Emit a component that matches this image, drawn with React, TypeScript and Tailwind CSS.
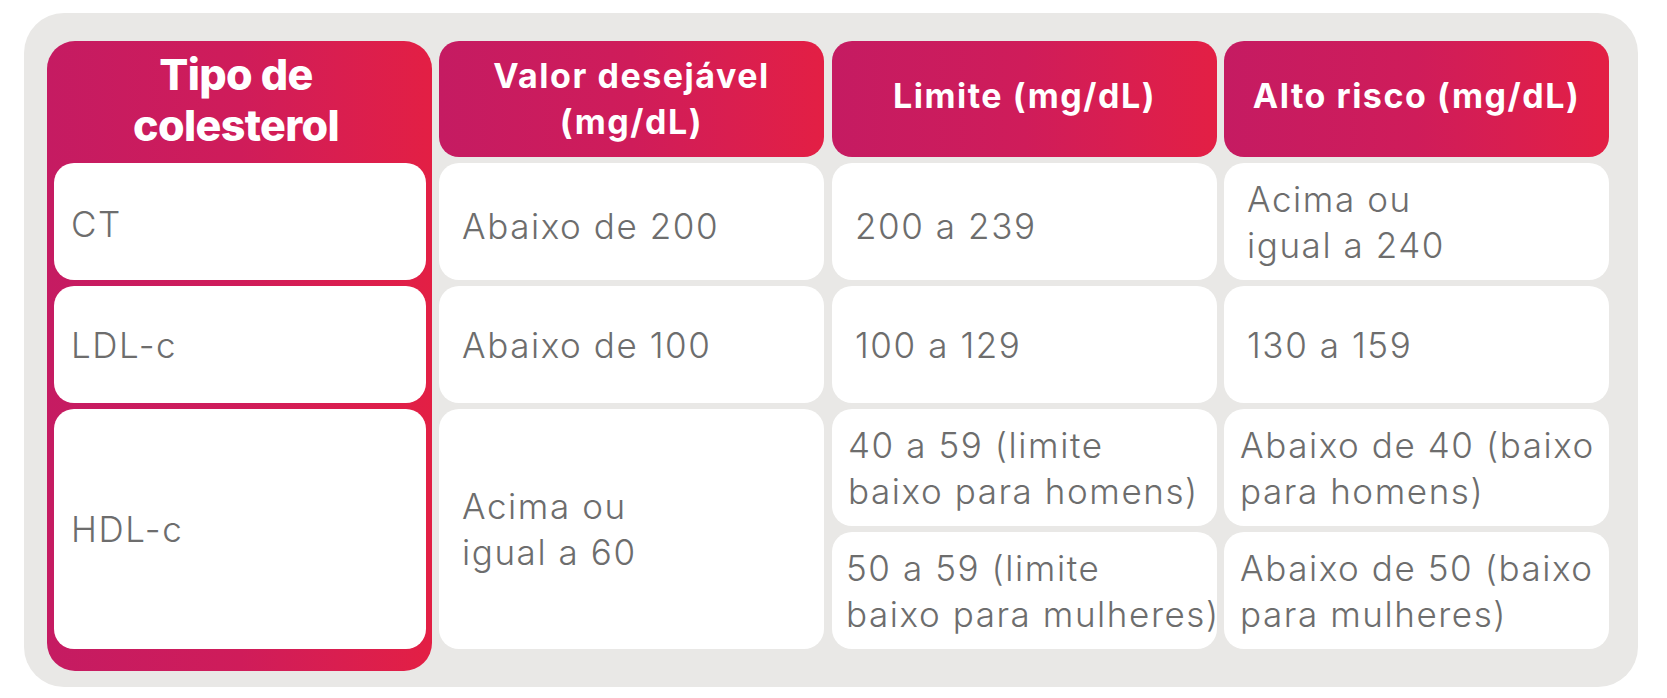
import React from 'react';

const font = { fontFamily: 'Inter, "Noto Sans", sans-serif' };

const headGrad = 'bg-linear-to-r from-[#c51b62] via-[#cf1c5a] to-[#e31f44]';

function Head({ lines, extra = '' }: { lines: string[]; extra?: string }) {
  return (
    <div
      className={`h-[116px] rounded-[20px] ${headGrad} ${extra} flex flex-col items-center justify-center text-white font-bold text-[34px] leading-[46px] tracking-[0.045em]`}
    >
      {lines.map((l) => (
        <span key={l}>{l}</span>
      ))}
    </div>
  );
}

function Cell({
  lines,
  h = 'h-[117px]',
  pad = 'pl-[23px]',
}: {
  lines: string[];
  h?: string;
  pad?: string;
}) {
  return (
    <div className={`${h} ${pad} rounded-[20px] bg-white flex flex-col justify-center text-[#6d6d6d] font-light text-[35px] leading-[46px] tracking-[0.045em]`}>
      {lines.map((l) => (
        <span key={l} className="whitespace-nowrap">{l}</span>
      ))}
    </div>
  );
}

export default function App() {
  return (
    <div className="w-[1667px] h-[698px] bg-white pt-[13px] pl-[24px]" style={font}>
      <div className="w-[1614px] h-[674px] rounded-[40px] bg-[#e9e8e6] pt-[28px] pl-[23px] flex gap-[7px]">
        {/* first column, pink frame */}
        <div className={`w-[385px] h-[630px] rounded-[28px] ${headGrad} flex flex-col gap-[6px] pl-[7px] pr-[6px]`}>
          <div className="h-[116px] flex flex-col items-center justify-center text-white font-extrabold text-[43px] leading-[51px] tracking-[-0.015em] pt-[2px] pr-[8px]">
            <span>Tipo de</span>
            <span>colesterol</span>
          </div>
          <Cell lines={['CT']} pad="pl-[17px] pt-[4px]" />
          <Cell lines={['LDL-c']} pad="pl-[17px]" />
          <Cell lines={['HDL-c']} h="h-[240px]" pad="pl-[17px]" />
        </div>

        {/* Valor desejavel */}
        <div className="w-[385px] flex flex-col gap-[6px]">
          <Head lines={['Valor desejável', '(mg/dL)']} />
          <Cell lines={['Abaixo de 200']} pad="pl-[23px] pt-[8px]" />
          <Cell lines={['Abaixo de 100']} />
          <Cell lines={['Acima ou', 'igual a 60']} h="h-[240px]" />
        </div>

        {/* Limite */}
        <div className="w-[385px] ml-px flex flex-col gap-[6px]">
          <Head lines={['Limite (mg/dL)']} extra="pb-[6px]" />
          <Cell lines={['200 a 239']} pad="pl-[23px] pt-[8px]" />
          <Cell lines={['100 a 129']} />
          <Cell lines={['40 a 59 (limite', 'baixo para homens)']} pad="pl-[16px]" />
          <Cell lines={['50 a 59 (limite', 'baixo para mulheres)']} pad="pl-[14px]" />
        </div>

        {/* Alto risco */}
        <div className="w-[385px] flex flex-col gap-[6px]">
          <Head lines={['Alto risco (mg/dL)']} extra="pb-[6px]" />
          <Cell lines={['Acima ou', 'igual a 240']} />
          <Cell lines={['130 a 159']} />
          <Cell lines={['Abaixo de 40 (baixo', 'para homens)']} pad="pl-[16px]" />
          <Cell lines={['Abaixo de 50 (baixo', 'para mulheres)']} pad="pl-[16px]" />
        </div>
      </div>
    </div>
  );
}
